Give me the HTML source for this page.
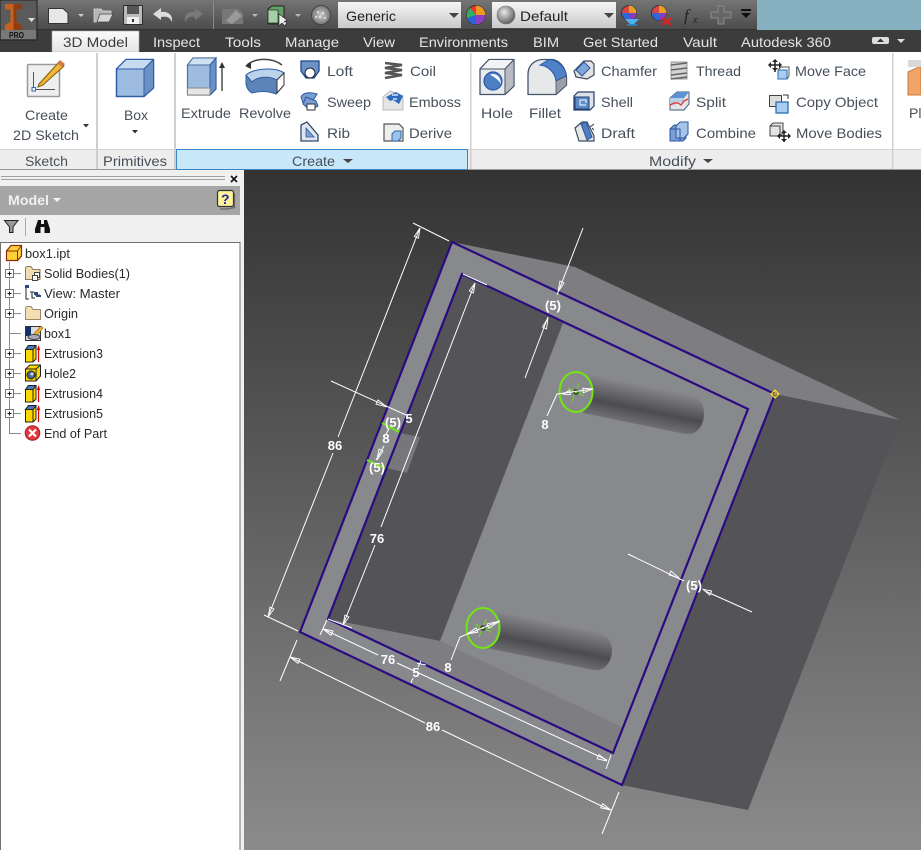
<!DOCTYPE html>
<html><head><meta charset="utf-8"><style>
html,body{margin:0;padding:0;background:#fff;width:921px;height:850px;overflow:hidden}
svg{display:block}
text{font-family:"Liberation Sans",sans-serif}
.t{font-size:14px;fill:#e4e4e4}
.r{font-size:14px;fill:#47505a}
.m{font-size:12.5px;fill:#2a2a2a}
.d{font-size:13px;font-weight:bold;fill:#fff;text-anchor:middle}
.dl{stroke:#fff;stroke-width:1;fill:none}
</style></head><body>
<svg xmlns="http://www.w3.org/2000/svg" width="921" height="850" viewBox="0 0 921 850">
<defs>
<linearGradient id="bar" x1="0" y1="0" x2="0" y2="1"><stop offset="0" stop-color="#757575"/><stop offset="1" stop-color="#4a4a4a"/></linearGradient>
<linearGradient id="combo" x1="0" y1="0" x2="0" y2="1"><stop offset="0" stop-color="#f6f6f6"/><stop offset="1" stop-color="#c9c9c9"/></linearGradient>
<linearGradient id="vp" x1="0" y1="0" x2="0" y2="1"><stop offset="0" stop-color="#333"/><stop offset="1" stop-color="#8b8b8b"/></linearGradient>
<linearGradient id="tab" x1="0" y1="0" x2="0" y2="1"><stop offset="0" stop-color="#fafafa"/><stop offset="1" stop-color="#e6e6e6"/></linearGradient>
<linearGradient id="cyl1" gradientUnits="userSpaceOnUse" x1="591" y1="375" x2="583" y2="414"><stop offset="0" stop-color="#87878b"/><stop offset=".6" stop-color="#4c4c50"/><stop offset="1" stop-color="#737377"/></linearGradient>
<linearGradient id="cyl2" gradientUnits="userSpaceOnUse" x1="495" y1="611" x2="487" y2="650"><stop offset="0" stop-color="#87878b"/><stop offset=".6" stop-color="#4c4c50"/><stop offset="1" stop-color="#737377"/></linearGradient>
<radialGradient id="sph" cx=".4" cy=".35" r=".7"><stop offset="0" stop-color="#e8e8e8"/><stop offset="1" stop-color="#555"/></radialGradient>
<radialGradient id="tex" cx=".5" cy=".5" r=".6"><stop offset="0" stop-color="#ccc"/><stop offset="1" stop-color="#666"/></radialGradient>
<g id="ext"><path d="M.5 4.500 3.500.5H11V14L8 17H.5Z" fill="#ffd800" stroke="#222"/><path d="M.5 4.500H8V17M8 4.500 11 .5" fill="none" stroke="#222"/><path d="M.5 4.500 3.500.5H11L8 4.500Z" fill="#4a78c0" stroke="#222"/><path d="M13.500 17V3" stroke="#d00" stroke-width="1.300"/><path d="M11.800 5 13.500 0 15.200 5Z" fill="#d00"/></g>
<g id="plus"><rect x="0.500" y="0.500" width="8" height="8" fill="#fff" stroke="#777"/><path d="M2.500 4.500H6.500M4.500 2.500V6.500" stroke="#111"/></g>
</defs>

<!-- title bar -->
<rect width="921" height="30" fill="#84b0c0"/>
<rect x="0" y="0" width="757" height="30" fill="url(#bar)"/>
<rect x="0" y="29" width="757" height="1" fill="#333"/>
<rect x="213" y="1" width="1" height="28" fill="#8a8a8a"/>
<rect x="0" y="30" width="921" height="22" fill="#3c3c3c"/>

<!-- app button -->
<rect x="0" y="0" width="37" height="40" fill="#5a5a5a" stroke="#222"/>
<rect x="1" y="30" width="35" height="9" fill="#787878"/>
<path d="M5 4H22V9.500H16.500V22L22 25V30H5V25L10.500 22V9.500H5Z" fill="#c9601f"/>
<path d="M13.500 4H22V9.500H16.500V22L22 25V30H13.500Z" fill="#8f3e14"/>
<text x="9" y="38" font-size="8" font-weight="bold" fill="#111" textLength="15" lengthAdjust="spacingAndGlyphs">PRO</text>
<path d="M28 18H35L31.500 22Z" fill="#ddd"/>

<!-- QAT icons -->
<path d="M48.500 8.500H63L68 13V23.500H48.500Z" fill="#e7e7e7" stroke="#333"/>
<path d="M78 14H84L81 17Z" fill="#ccc"/>
<path d="M94 9H101L103 11H111V14H101L98 22H94Z" fill="#b5b5b5" stroke="#ddd" stroke-width=".7"/><path d="M97 22 100 14H113L109 22Z" fill="#d6d6d6" stroke="#444" stroke-width=".7"/>
<rect x="123.500" y="5.500" width="19" height="19" rx="1" fill="#bbb" stroke="#2c2c2c"/><rect x="127" y="6" width="12" height="8" fill="#555"/><rect x="127" y="17" width="12" height="7" fill="#f0f0f0"/><rect x="132" y="19" width="2" height="3" fill="#333"/>
<path d="M153 14 161 8V12C168 11 173 15 172 22C170 17 166 16 161 17V20Z" fill="#ddd"/>
<path d="M203 14 195 8V12C188 11 184 15 185 22C187 17 191 16 195 17V20Z" fill="#7a7a7a"/>
<path d="M222 9H238L243 13V24H222Z" fill="#777"/><path d="M226 21 236 10 242 16 232 24Z" fill="#9a9a9a"/>
<path d="M252 14H258L255 17Z" fill="#bbb"/>
<path d="M268 9 272 6H284V21L281 24H268Z" fill="#64a166" stroke="#222"/><rect x="268" y="10" width="10" height="13" fill="#a6d1a8" stroke="#222" stroke-width=".7"/>
<path d="M279 14V26L282 23 285 26 287 22 284 22 287 20Z" fill="#eee" stroke="#222" stroke-width=".6"/>
<path d="M295 14H301L298 17Z" fill="#bbb"/>
<circle cx="321" cy="15" r="9.500" fill="url(#tex)" stroke="#444"/>
<circle cx="318" cy="12" r="1" fill="#eee"/><circle cx="323" cy="13" r="1" fill="#eee"/><circle cx="320" cy="17" r="1" fill="#eee"/><circle cx="325" cy="18" r="1" fill="#eee"/><circle cx="316" cy="17" r="1" fill="#eee"/>

<rect x="338" y="2" width="123" height="26" fill="url(#combo)"/>
<text x="346" y="21" class="r" style="fill:#222" textLength="50" lengthAdjust="spacingAndGlyphs">Generic</text>
<path d="M449 13H459L454 18Z" fill="#444"/>
<circle cx="476" cy="15" r="9.500" fill="#e33" stroke="#333"/>
<path d="M476 15 476 5.500A9.500 9.500 0 0 1 485.500 15Z" fill="#ee9a20"/><path d="M476 15H485.500A9.500 9.500 0 0 1 476 24.500Z" fill="#8c3fc0"/><path d="M476 15V24.500A9.500 9.500 0 0 1 467 18Z" fill="#2a65d8"/><path d="M476 15 467 18A9.500 9.500 0 0 1 470 8Z" fill="#30b060"/>
<rect x="492" y="2" width="124" height="26" fill="url(#combo)"/>
<circle cx="506" cy="15" r="9" fill="url(#sph)" stroke="#777" stroke-width=".6"/>
<text x="520" y="21" class="r" style="fill:#222" textLength="48" lengthAdjust="spacingAndGlyphs">Default</text>
<path d="M604 13H614L609 18Z" fill="#444"/>
<circle cx="629" cy="13" r="7.500" fill="#d44" stroke="#333"/><path d="M629 13V5.500A7.500 7.500 0 0 1 636.500 13Z" fill="#e9a020"/><path d="M629 13H636.500A7.500 7.500 0 0 1 629 20.500Z" fill="#8a3cc0"/><path d="M629 13V20.500A7.500 7.500 0 0 1 622 13Z" fill="#2d68d8"/>
<path d="M625 19H639L634 24V25H630V24Z" fill="#4fb2f0"/><rect x="627" y="24" width="10" height="1.500" fill="#2c8ad0"/>
<circle cx="659" cy="13" r="7.500" fill="#d44" stroke="#333"/><path d="M659 13V5.500A7.500 7.500 0 0 1 666.500 13Z" fill="#e9a020"/><path d="M659 13H666.500A7.500 7.500 0 0 1 659 20.500Z" fill="#8a3cc0"/><path d="M659 13V20.500A7.500 7.500 0 0 1 652 13Z" fill="#2d68d8"/>
<path d="M662 18 671 25M671 18 662 25" stroke="#e02020" stroke-width="2.200"/>
<text x="684" y="21" font-size="17" font-style="italic" style="font-family:'Liberation Serif',serif" fill="#222">f</text><text x="693" y="23" font-size="10" font-style="italic" style="font-family:'Liberation Serif',serif" fill="#222">x</text>
<path d="M718 6H724V12H731V18H724V24H718V18H711V12H718Z" fill="#666" stroke="#8a8a8a"/>
<rect x="741" y="9" width="10" height="2" fill="#111"/><path d="M741 13H751L746 18Z" fill="#111"/>

<!-- tabs -->
<rect x="52" y="31" width="87" height="21" fill="url(#tab)" stroke="#aaa" stroke-width=".6"/>
<text x="63" y="47" class="t" style="fill:#3c3c3c" textLength="65" lengthAdjust="spacingAndGlyphs">3D Model</text>
<text x="153" y="47" class="t" textLength="47" lengthAdjust="spacingAndGlyphs">Inspect</text>
<text x="225" y="47" class="t" textLength="36" lengthAdjust="spacingAndGlyphs">Tools</text>
<text x="285" y="47" class="t" textLength="54" lengthAdjust="spacingAndGlyphs">Manage</text>
<text x="363" y="47" class="t" textLength="32" lengthAdjust="spacingAndGlyphs">View</text>
<text x="419" y="47" class="t" textLength="89" lengthAdjust="spacingAndGlyphs">Environments</text>
<text x="533" y="47" class="t" textLength="26" lengthAdjust="spacingAndGlyphs">BIM</text>
<text x="583" y="47" class="t" textLength="75" lengthAdjust="spacingAndGlyphs">Get Started</text>
<text x="683" y="47" class="t" textLength="34" lengthAdjust="spacingAndGlyphs">Vault</text>
<text x="741" y="47" class="t" textLength="90" lengthAdjust="spacingAndGlyphs">Autodesk 360</text>
<rect x="872" y="37" width="17" height="7" rx="2" fill="#ddd"/><path d="M877 42H884L880.500 38.500Z" fill="#333"/>
<path d="M897 39H905L901 43Z" fill="#ddd"/>

<!-- ribbon -->
<rect x="0" y="52" width="921" height="118" fill="#fff"/>
<rect x="0" y="149" width="921" height="20" fill="#ededed"/>
<rect x="0" y="149" width="921" height="1" fill="#d4d4d4"/>
<rect x="0" y="169" width="921" height="1" fill="#9a9a9a"/>
<rect x="96" y="53" width="2" height="116" fill="#cfcfcf"/>
<rect x="174" y="53" width="2" height="116" fill="#cfcfcf"/>
<rect x="470" y="53" width="1.500" height="116" fill="#cfcfcf"/>
<rect x="892" y="53" width="1.500" height="116" fill="#cfcfcf"/>
<rect x="176.500" y="149.500" width="291" height="20" fill="#c8e7f8" stroke="#3a86c4"/>

<!-- Sketch icon -->
<rect x="27.500" y="64.500" width="32" height="32" rx="1" fill="#efefef" stroke="#999" stroke-width="1.500"/>
<path d="M33.500 72V89.500H55" stroke="#555" fill="none" stroke-width="1"/><rect x="32" y="87.500" width="3.500" height="3.500" fill="#fff" stroke="#2b6cc0"/>
<path d="M39 84 59 62 64 66 43 85 38 87Z" fill="#f2b632" stroke="#7b5a10"/><path d="M57 63 60 60 65 64 62 67Z" fill="#d07a4a"/>
<text x="25" y="120" class="r" textLength="43" lengthAdjust="spacingAndGlyphs">Create</text>
<text x="13" y="140" class="r" textLength="66" lengthAdjust="spacingAndGlyphs">2D Sketch</text>
<path d="M83 124H89L86 127.500Z" fill="#333"/>

<!-- Box -->
<path d="M116.500 69 126 59.500H153.500V88L144 96.500H116.500Z" fill="#9dbcdf" stroke="#2e5ca8" stroke-width="1.500" stroke-linejoin="round"/>
<path d="M116.500 69 126 59.500H153.500L144 69Z" fill="#c6daf0" stroke="#2e5ca8" stroke-linejoin="round"/>
<path d="M144 69 153.500 59.500V88L144 96.500Z" fill="#6b90c2" stroke="#2e5ca8" stroke-linejoin="round"/>
<text x="124" y="120" class="r" textLength="24" lengthAdjust="spacingAndGlyphs">Box</text>
<path d="M132 130H138L135 133.500Z" fill="#333"/>

<!-- Extrude -->
<path d="M187.500 65 193 58H216V89L210 95H187.500Z" fill="#9dbcdf" stroke="#4f6f9c" stroke-width="1.200"/>
<path d="M187.500 65 193 58H216L210 65Z" fill="#d0e1f3" stroke="#4f6f9c"/>
<path d="M210 65 216 58V89L210 95Z" fill="#6b90c2" stroke="#2e5ca8"/>
<path d="M187.500 88H210V95H187.500Z" fill="#e6e6e6" stroke="#888"/>
<path d="M222 91V67" stroke="#333" stroke-width="1.300"/><path d="M219 68 222 62 225 68Z" fill="#333"/>
<text x="181" y="118" class="r" textLength="50" lengthAdjust="spacingAndGlyphs">Extrude</text>

<!-- Revolve -->
<path d="M247 65C255 58 272 57 282 65" fill="none" stroke="#444" stroke-width="1.500"/><path d="M245 66 251 62 251 69Z" fill="#333"/>
<path d="M246 75C255 69 274 69 283 74L283 86 276 94C268 91 259 91 252 93C247 90 246 86 246 82Z" fill="#5d84b8" stroke="#2e5ca8"/>
<path d="M246 75C254 68 276 67 284 73L277 80C270 76 258 76 252 82Z" fill="#bcd3ec" stroke="#2e5ca8"/>
<path d="M277 80 284 73V85L277 93Z" fill="#fff" stroke="#333"/>
<text x="239" y="118" class="r" textLength="52" lengthAdjust="spacingAndGlyphs">Revolve</text>

<!-- small create icons -->
<path d="M301 61H319V71L314 78H306L301 71Z" fill="#6d92c6" stroke="#1e488f" stroke-width="1.300"/><circle cx="310" cy="73" r="5" fill="#fff" stroke="#223"/>
<text x="327" y="76" class="r" textLength="26" lengthAdjust="spacingAndGlyphs">Loft</text>
<path d="M301 97C303 92 311 92 317 94L314 99 303 103Z" fill="#7a9ed0" stroke="#2b55a0"/><path d="M306 97 316 101 318 106 310 110 303 104Z" fill="#7a9ed0" stroke="#2b55a0"/><rect x="307" y="104" width="8" height="6" fill="#fff" stroke="#333"/>
<text x="327" y="107" class="r" textLength="44" lengthAdjust="spacingAndGlyphs">Sweep</text>
<path d="M301 125 307 122 318 135 318 141H301Z" fill="#dfe6ef" stroke="#33496a" stroke-width="1.300"/><path d="M306 128 314 137H306Z" fill="#7fa2d0" stroke="#2b55a0" stroke-width=".8"/>
<text x="327" y="138" class="r" textLength="23" lengthAdjust="spacingAndGlyphs">Rib</text>

<path d="M385 63 402 65 385 68 402 70 385 73 402 75 385 78" stroke="#555" stroke-width="2.600" fill="none"/>
<text x="410" y="76" class="r" textLength="26" lengthAdjust="spacingAndGlyphs">Coil</text>
<path d="M383 110V97L390 91 403 96 403 110Z" fill="#e4e4e4" stroke="#bbb"/><path d="M386 97 396 92 403 96 399 104 393 100 390 101Z" fill="#2d6cc0"/>
<path d="M392 95H398M393 99H397" stroke="#fff" stroke-width="1.300"/>
<text x="409" y="107" class="r" textLength="52" lengthAdjust="spacingAndGlyphs">Emboss</text>
<path d="M384 124H399L403 128V141H384Z" fill="#eee" stroke="#555" stroke-width="1.200"/><path d="M392 134 395 131H401V138L398 141H392Z" fill="#9dc3ea" stroke="#2b6cb0"/>
<text x="409" y="138" class="r" textLength="43" lengthAdjust="spacingAndGlyphs">Derive</text>
<text x="292" y="166" class="r" textLength="43" lengthAdjust="spacingAndGlyphs">Create</text>
<path d="M343 159H353L348 163Z" fill="#444"/>
<text x="25" y="166" class="r" textLength="43" lengthAdjust="spacingAndGlyphs">Sketch</text>
<text x="103" y="166" class="r" textLength="64" lengthAdjust="spacingAndGlyphs">Primitives</text>

<!-- Hole -->
<path d="M480 69 489 59.500H514V86L505 94.500H480Z" fill="#e8eaec" stroke="#44536b" stroke-width="1.300" stroke-linejoin="round"/>
<path d="M480 69 489 59.500H514L505 69Z" fill="#f2f3f5" stroke="#44536b" stroke-linejoin="round"/>
<path d="M505 69 514 59.500V86L505 94.500Z" fill="#b8bcc2" stroke="#44536b" stroke-linejoin="round"/>
<circle cx="493" cy="81" r="9" fill="#4d7fc4" stroke="#2a5aa8" stroke-width="1.200"/><path d="M490 74.500C496 72.500 501 77 501 84 498 79 494 77 490 74.500Z" fill="#fff"/>
<text x="481" y="118" class="r" textLength="32" lengthAdjust="spacingAndGlyphs">Hole</text>

<!-- Fillet -->
<path d="M528 94.500V74C528 66 534 60 542 59.500H553C560 61 566 68 566.500 78V85L556 94.500Z" fill="#e6e8ea" stroke="#44536b" stroke-width="1.300" stroke-linejoin="round"/>
<path d="M540 65 549 59.500C558 60 566 68 566.500 76L556 81C555 73 549 66 540 65Z" fill="#4d82c8" stroke="#2a5aa8"/>
<path d="M556 81 566.500 76V85L556 94.500Z" fill="#9aa0a8" stroke="#44536b" stroke-width=".8"/>
<text x="529" y="118" class="r" textLength="32" lengthAdjust="spacingAndGlyphs">Fillet</text>

<!-- modify small -->
<path d="M574 71 584 61H591L594 64V75L587 79 576 77Z" fill="#e2e2e2" stroke="#3a4a63" stroke-width="1.200"/><path d="M576 70 584 62 590 68 582 76Z" fill="#7fa6d8" stroke="#2b55a0"/>
<text x="601" y="76" class="r" textLength="56" lengthAdjust="spacingAndGlyphs">Chamfer</text>
<path d="M574 96 578 92H594V106L590 110H574Z" fill="#dfe2e6" stroke="#24406f" stroke-width="1.200"/><rect x="575" y="97" width="14" height="12" fill="#5d8ac8" stroke="#24406f"/><path d="M580 100V105H586M580 100H586V103" fill="none" stroke="#fff"/>
<text x="601" y="107" class="r" textLength="32" lengthAdjust="spacingAndGlyphs">Shell</text>
<path d="M575 128 582 122H587L594 136V141H579Z" fill="#e6e6e6" stroke="#3a4a63" stroke-width="1.200"/><path d="M581 124 586 122 592 137 587 140Z" fill="#4f7fc0" stroke="#2b55a0"/><path d="M590 127 594 124M594 130 592 128" stroke="#333"/>
<text x="601" y="138" class="r" textLength="34" lengthAdjust="spacingAndGlyphs">Draft</text>

<path d="M671 62H687V79H671Z" fill="#d4d4d4" stroke="#999"/><path d="M671 65 687 63M671 70 687 68M671 75 687 73M671 79 687 77" stroke="#666" stroke-width="1.400"/>
<text x="696" y="76" class="r" textLength="45" lengthAdjust="spacingAndGlyphs">Thread</text>
<path d="M670 98 677 92H689V104L684 110H670Z" fill="#e4e4e4" stroke="#42597e"/><path d="M670 98 677 92H689L684 98Z" fill="#5c92d6"/><path d="M670 98H684V103L678 102 674 106 670 104Z" fill="#b9cfe8"/><path d="M670 105 674 103 678 103 681 105 684 101 688 99" stroke="#d33" stroke-width="1.300" fill="none"/>
<text x="696" y="107" class="r" textLength="30" lengthAdjust="spacingAndGlyphs">Split</text>
<path d="M670 129 674 125H680V132H686V138L683 141H670Z" fill="#79a0d4" stroke="#2b55a0"/><path d="M676 126 680 122H688V134L684 138H676Z" fill="#a6c4e6" stroke="#2b55a0"/><path d="M670 129H680V141" fill="none" stroke="#2b55a0"/>
<text x="696" y="138" class="r" textLength="60" lengthAdjust="spacingAndGlyphs">Combine</text>

<path d="M769 65H781M775 60V72" stroke="#222" stroke-width="1.500"/><path d="M772 62 775 59 778 62ZM772 68 775 71 778 68ZM771 62 768 65 771 68ZM779 62 782 65 779 68Z" fill="#222"/>
<rect x="778" y="70" width="9" height="9" fill="#a8cdf0" stroke="#2b6cb0"/><path d="M778 70 781 67H789V76L787 79" fill="none" stroke="#555"/>
<text x="795" y="76" class="r" textLength="71" lengthAdjust="spacingAndGlyphs">Move Face</text>
<rect x="769.500" y="95.500" width="12" height="11" fill="#ddd" stroke="#444"/><rect x="776" y="102" width="12" height="11" fill="#a8cdf0" stroke="#2b6cb0" stroke-width="1.300"/><path d="M783 95H788V99" fill="none" stroke="#333"/>
<text x="796" y="107" class="r" textLength="82" lengthAdjust="spacingAndGlyphs">Copy Object</text>
<path d="M770 126 773 123H783V133L780 136H770Z" fill="#e4e4e4" stroke="#444"/><path d="M770 126H780V136" fill="none" stroke="#444"/>
<path d="M778 136H790M784 131V142" stroke="#222" stroke-width="1.500"/><path d="M781 133 784 130 787 133ZM781 139 784 142 787 139ZM780 133 777 136 780 139ZM788 133 791 136 788 139Z" fill="#222"/>
<text x="796" y="138" class="r" textLength="86" lengthAdjust="spacingAndGlyphs">Move Bodies</text>
<text x="649" y="166" class="r" textLength="47" lengthAdjust="spacingAndGlyphs">Modify</text>
<path d="M703 159H713L708 163Z" fill="#444"/>
<path d="M908 72 921 66V95H908Z" fill="#f0a468" stroke="#c8783a"/><rect x="908" y="60" width="13" height="7" fill="#d9d9d9"/>
<text x="909" y="118" class="r">Pl</text>

<!-- viewport -->
<rect x="244" y="170" width="677" height="680" fill="url(#vp)"/>
<path d="M452 242 575 267 900 420 775 394Z" fill="#7e7d81"/>
<path d="M775 394 900 420 748 810 622 785Z" fill="#535358"/>
<path d="M452 242 775 394 622 785 300 632Z" fill="#88898d"/>
<path d="M462 274 563 323 440 641 328 619Z" fill="#535358"/>
<path d="M328 619 440 641 622 727 613 753Z" fill="#7e7d81"/>
<path d="M400 433 420 437 407 473 387 468Z" fill="#77777b"/>

<!-- cylinders -->
<path d="M590 375 690 395C700 397 704 405 704 414 704 425 697 436 685 434L583 413Z" fill="url(#cyl1)"/>
<path d="M493 611 597 632C606 634 612 642 612 650 612 662 604 672 593 670L487 648Z" fill="url(#cyl2)"/>

<!-- edges -->
<g fill="none" stroke="#2c0a82" stroke-width="2.200" stroke-linejoin="miter">
<path d="M452 242 775 394 622 785 300 632Z"/>
<path d="M462 274 748 409 613 753 328 619Z"/>
</g>

<!-- holes -->
<ellipse cx="576" cy="392" rx="16.500" ry="20" fill="#88898d" stroke="#6fe810" stroke-width="2"/>
<ellipse cx="483" cy="628" rx="16.500" ry="20" fill="#88898d" stroke="#6fe810" stroke-width="2"/>
<g stroke="#6fe810" stroke-width=".8"><path d="M579 383 572 401M568 388 584 396M566 392H586"/><path d="M486 619 479 637M475 624 491 632M473 628H493"/></g>
<circle cx="576" cy="392" r="2.800" fill="#333"/><circle cx="576" cy="392" r="1.300" fill="#6fe810"/>
<circle cx="483" cy="628" r="2.800" fill="#333"/><circle cx="483" cy="628" r="1.300" fill="#6fe810"/>

<!-- green small -->
<path d="M382 423 399 432M367 460 385 468" stroke="#6fe810" stroke-width="2"/>

<!-- dims -->
<g class="dl">
<path d="M413 223 449 241M420 228 338 437M333 453 268 617M264 615 298 631"/>
<path d="M583 228 557 295M548 317 525 378"/>
<path d="M331 381 406 415"/>
<path d="M389 429 386 434M384 446 376 460"/>
<path d="M475 283 381 527M375 545 343 625"/>
<path d="M463 274 487 285M328 619 352 628M417 663 426 665"/>
<path d="M320 635 327 620M323 629 378 655M397 663 607 760M606 769 611 755"/>
<path d="M411 683 413 678M418 667 421 661"/>
<path d="M280 681 297 640M290 657 425 723M442 730 610 810M602 834 619 792"/>
<path d="M628 554 684 581M705 591 752 612"/>
<path d="M593 389 557 394 547 416M500 621 460 637 451 660"/>
</g>
<!-- arrowheads -->
<g fill="none" stroke="#fff" stroke-width=".9">
<path d="M420 228 418.500 238.100 414.300 236.500Z"/><path d="M268 617 274 609 270 607Z"/>
<path d="M475 283 473.500 293 469.300 291Z"/><path d="M343 625 349 617 345 615Z"/>
<path d="M558 292 564 283 560 281Z"/><path d="M548 318 546.500 329 542.500 327Z"/>
<path d="M387 407 376 404.100 378 399.900Z"/>
<path d="M323 629 333 631 331 635.400Z"/><path d="M607 761 599 754.600 597 758.800Z"/>
<path d="M290 657 300 659.200 298 663.400Z"/><path d="M610.700 810 602.700 803.600 600.700 807.800Z"/>
<path d="M679 578 671 571 669 575Z"/><path d="M703 589.300 711.700 591 709.700 595.100Z"/>
<path d="M593 389 583.300 392.800 582.700 388.200Z"/><path d="M563 394 570.300 394.800 569.700 390.200Z"/>
<path d="M500 621 488.900 628.100 487.100 623.900Z"/><path d="M467 634 477.900 632.100 476.100 627.900Z"/>
<path d="M377 460 383 451 379 449Z"/>
</g>
<!-- yellow marker -->
<path d="M775 390 779 394 775 398 771 394Z" fill="none" stroke="#ffe81a"/><path d="M775 390V398M771 394H779" stroke="#ffe81a" stroke-width=".8"/>
<!-- dim text -->
<text x="335" y="450" class="d">86</text>
<text x="553" y="310" class="d">(5)</text>
<text x="409" y="423" class="d">5</text>
<text x="393" y="427" class="d">(5)</text>
<text x="386" y="443" class="d">8</text>
<text x="377" y="472" class="d">(5)</text>
<text x="377" y="543" class="d">76</text>
<text x="388" y="664" class="d">76</text>
<text x="416" y="677" class="d">5</text>
<text x="433" y="731" class="d">86</text>
<text x="694" y="590" class="d">(5)</text>
<text x="545" y="429" class="d">8</text>
<text x="448" y="672" class="d">8</text>

<!-- left panel -->
<rect x="0" y="170" width="244" height="680" fill="#f0f0f0"/>
<path d="M1 176.500H225M1 179.500H225" stroke="#a0a0a0"/>
<path d="M231 176 237 182M237 176 231 182" stroke="#111" stroke-width="1.600"/>
<rect x="0" y="186" width="240" height="29" fill="#a6a6a6"/>
<text x="8" y="205" font-size="14" font-weight="bold" fill="#f0f0f0" textLength="41" lengthAdjust="spacingAndGlyphs">Model</text>
<path d="M53 198H61L57 202Z" fill="#f4f4f4"/>
<rect x="217.500" y="190.500" width="16" height="16" rx="2" fill="#fff29a" stroke="#333" stroke-width="1.200"/>
<path d="M234.500 193V207.500L228 209H220" fill="none" stroke="#666" stroke-width="1.200"/>
<text x="221" y="204" font-size="14" font-weight="bold" fill="#1a2a9a">?</text>
<path d="M4.500 220.500H18L13 227V232.500H9.500V227Z" fill="#999" stroke="#222"/>
<rect x="25" y="218" width="1" height="18" fill="#aaa"/>
<path d="M38 220H41V224H44V220H47L50 229V233H44.500V227H40.500V233H35V229Z" fill="#111"/>
<rect x="0.500" y="242.500" width="239.500" height="608" fill="#fff" stroke="#707070"/>

<!-- tree lines -->
<g stroke="#8a8a8a" fill="none">
<path d="M9.500 262V433.500H21M14 273.500H21M14 293.500H21M14 313.500H21M9.500 333.500H21M14 353.500H21M14 373.500H21M14 393.500H21M14 413.500H21"/>
</g>
<use href="#plus" x="5" y="269"/><use href="#plus" x="5" y="289"/><use href="#plus" x="5" y="309"/><use href="#plus" x="5" y="349"/><use href="#plus" x="5" y="369"/><use href="#plus" x="5" y="389"/><use href="#plus" x="5" y="409"/>

<!-- tree icons -->
<path d="M6.500 251 11 245.500H21.500V256L17.500 260.500H6.500Z" fill="#ffd23a" stroke="#8c2a06" stroke-width="1.200"/><path d="M6.500 251H17.500V260.500M17.500 251 21.500 245.500" fill="none" stroke="#8c2a06"/>
<text x="25" y="258" class="m" textLength="45" lengthAdjust="spacingAndGlyphs">box1.ipt</text>

<path d="M25.500 268V279.500H40V269.500H33L31 266.500H27Z" fill="#f2dcb4" stroke="#8a7a60"/><rect x="34.500" y="272.500" width="5" height="5" fill="#fff" stroke="#444"/><rect x="32.500" y="275.500" width="5" height="5" fill="#fff" stroke="#444"/>
<text x="44" y="278" class="m" textLength="86" lengthAdjust="spacingAndGlyphs">Solid Bodies(1)</text>

<path d="M29 287H26V299H29M30 292H34M32 292V298H35M35 295H40" stroke="#223" fill="none"/><rect x="25" y="285" width="4" height="3" fill="#2a4a80"/><rect x="34" y="292" width="4" height="3" fill="#2a4a80"/><rect x="36" y="295" width="5" height="2" fill="#2a4a80"/>
<text x="44" y="298" class="m" textLength="76" lengthAdjust="spacingAndGlyphs">View: Master</text>

<path d="M25.500 308V319.500H40.500V309.500H33L31 306.500H27Z" fill="#f6deb2" stroke="#958a6e"/>
<text x="44" y="318" class="m" textLength="34" lengthAdjust="spacingAndGlyphs">Origin</text>

<rect x="25.500" y="326.500" width="15" height="14" fill="#dcdcdc" stroke="#333"/><rect x="26" y="327" width="5" height="9" fill="#16306a"/><path d="M32 336 41 326 43 328 35 338Z" fill="#f0b030" stroke="#8a6010" stroke-width=".6"/><ellipse cx="34" cy="337" rx="6" ry="2.500" fill="#aab" stroke="#445"/>
<text x="44" y="338" class="m" textLength="27" lengthAdjust="spacingAndGlyphs">box1</text>

<use href="#ext" x="25" y="345"/>
<text x="44" y="358" class="m" textLength="59" lengthAdjust="spacingAndGlyphs">Extrusion3</text>

<path d="M25.500 369 30 365H40.500V376L36 381H25.500Z" fill="#ffd800" stroke="#222"/><path d="M25.500 369H36V381M36 369 40.500 365" fill="none" stroke="#222"/><circle cx="31" cy="375" r="4" fill="#4a6a90" stroke="#222"/><circle cx="32" cy="374" r="1.500" fill="#cde"/>
<text x="44" y="378" class="m" textLength="32" lengthAdjust="spacingAndGlyphs">Hole2</text>

<use href="#ext" x="25" y="385"/>
<text x="44" y="398" class="m" textLength="59" lengthAdjust="spacingAndGlyphs">Extrusion4</text>
<use href="#ext" x="25" y="405"/>
<text x="44" y="418" class="m" textLength="59" lengthAdjust="spacingAndGlyphs">Extrusion5</text>

<circle cx="32.500" cy="433" r="7.300" fill="#e4393c" stroke="#a02020"/><path d="M29 429.500 36 436.500M36 429.500 29 436.500" stroke="#fff" stroke-width="2.200"/>
<text x="44" y="438" class="m" textLength="63" lengthAdjust="spacingAndGlyphs">End of Part</text>
</svg>
</body></html>
